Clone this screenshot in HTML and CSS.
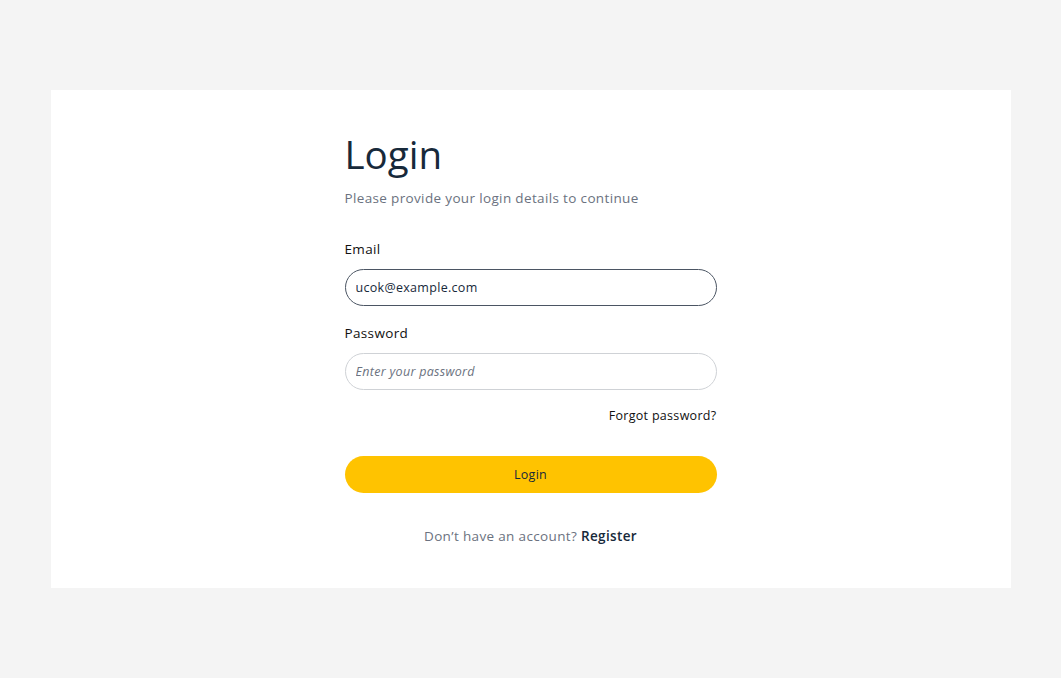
FILE: index.html
```html
<!DOCTYPE html>
<html lang="en">
<head>
<meta charset="utf-8">
<title>Login</title>
<link rel="stylesheet" href="styles.css">
</head>
<body>
<div class="page">
  <main class="card">
    <form class="form">
      <h1 class="title">Login</h1>
      <p class="subtitle">Please provide your login details to continue</p>
      <div class="field">
        <label class="label" for="email">Email</label>
        <input class="input input-active" id="email" type="email" value="ucok@example.com">
      </div>
      <div class="field">
        <label class="label" for="password">Password</label>
        <input class="input" id="password" type="password" placeholder="Enter your password">
      </div>
      <div class="forgot-row"><a class="forgot" href="#">Forgot password?</a></div>
      <button class="btn" type="button">Login</button>
      <p class="register">Don’t have an account? <a href="#" class="register-link">Register</a></p>
    </form>
  </main>
</div>
</body>
</html>
```
FILE: styles.css
```css
* { box-sizing: border-box; }
html, body { margin: 0; padding: 0; }
body {
  background: #f4f4f4;
  font-family: "Open Sans", "Noto Sans", sans-serif;
  color: #111;
}
.page {
  min-height: 678px;
  display: flex;
  align-items: center;
  justify-content: center;
}
.card {
  width: 960px;
  height: 498px;
  background: #fff;
  display: flex;
  justify-content: center;
  padding-top: 36px;
}
.form {
  width: 372px;
  display: flex;
  flex-direction: column;
}
.title {
  margin: 0;
  font-size: 38.5px;
  font-weight: 400;
  line-height: 56px;
  color: #17293a;
}
.subtitle {
  margin: 6px 0 0;
  font-size: 13.5px;
  line-height: 20px;
  color: #6b7280;
  letter-spacing: 0.35px;
}
.field {
  display: flex;
  flex-direction: column;
}
.field:first-of-type { margin-top: 31px; }
.field + .field { margin-top: 17px; }
.label {
  font-size: 13.5px;
  line-height: 20px;
  color: #111;
  margin-bottom: 10px;
  letter-spacing: 0.35px;
}
.input {
  height: 37px;
  border: 1px solid #cfd2d6;
  border-radius: 19px;
  padding: 0 10px;
  font-family: inherit;
  font-size: 12.5px;
  letter-spacing: 0.3px;
  color: #17293a;
  outline: none;
  background: #fff;
}
.input-active { border-color: #4b5563; }
.input::placeholder {
  font-style: italic;
  color: #6b7280;
}
.forgot-row {
  display: flex;
  justify-content: flex-end;
  margin-top: 17px;
}
.forgot {
  font-size: 12.5px;
  line-height: 18px;
  letter-spacing: 0.3px;
  color: #111;
  text-decoration: none;
}
.btn {
  margin-top: 31px;
  height: 37px;
  border: 0;
  border-radius: 19px;
  background: #ffc300;
  font-family: inherit;
  font-size: 12.5px;
  letter-spacing: 0.3px;
  color: #17293a;
  cursor: pointer;
}
.register {
  margin: 33px 0 0;
  text-align: center;
  font-size: 13.5px;
  line-height: 20px;
  letter-spacing: 0.35px;
  color: #6b7280;
}
.register-link {
  color: #17293a;
  font-weight: 600;
  text-decoration: none;
}
```
